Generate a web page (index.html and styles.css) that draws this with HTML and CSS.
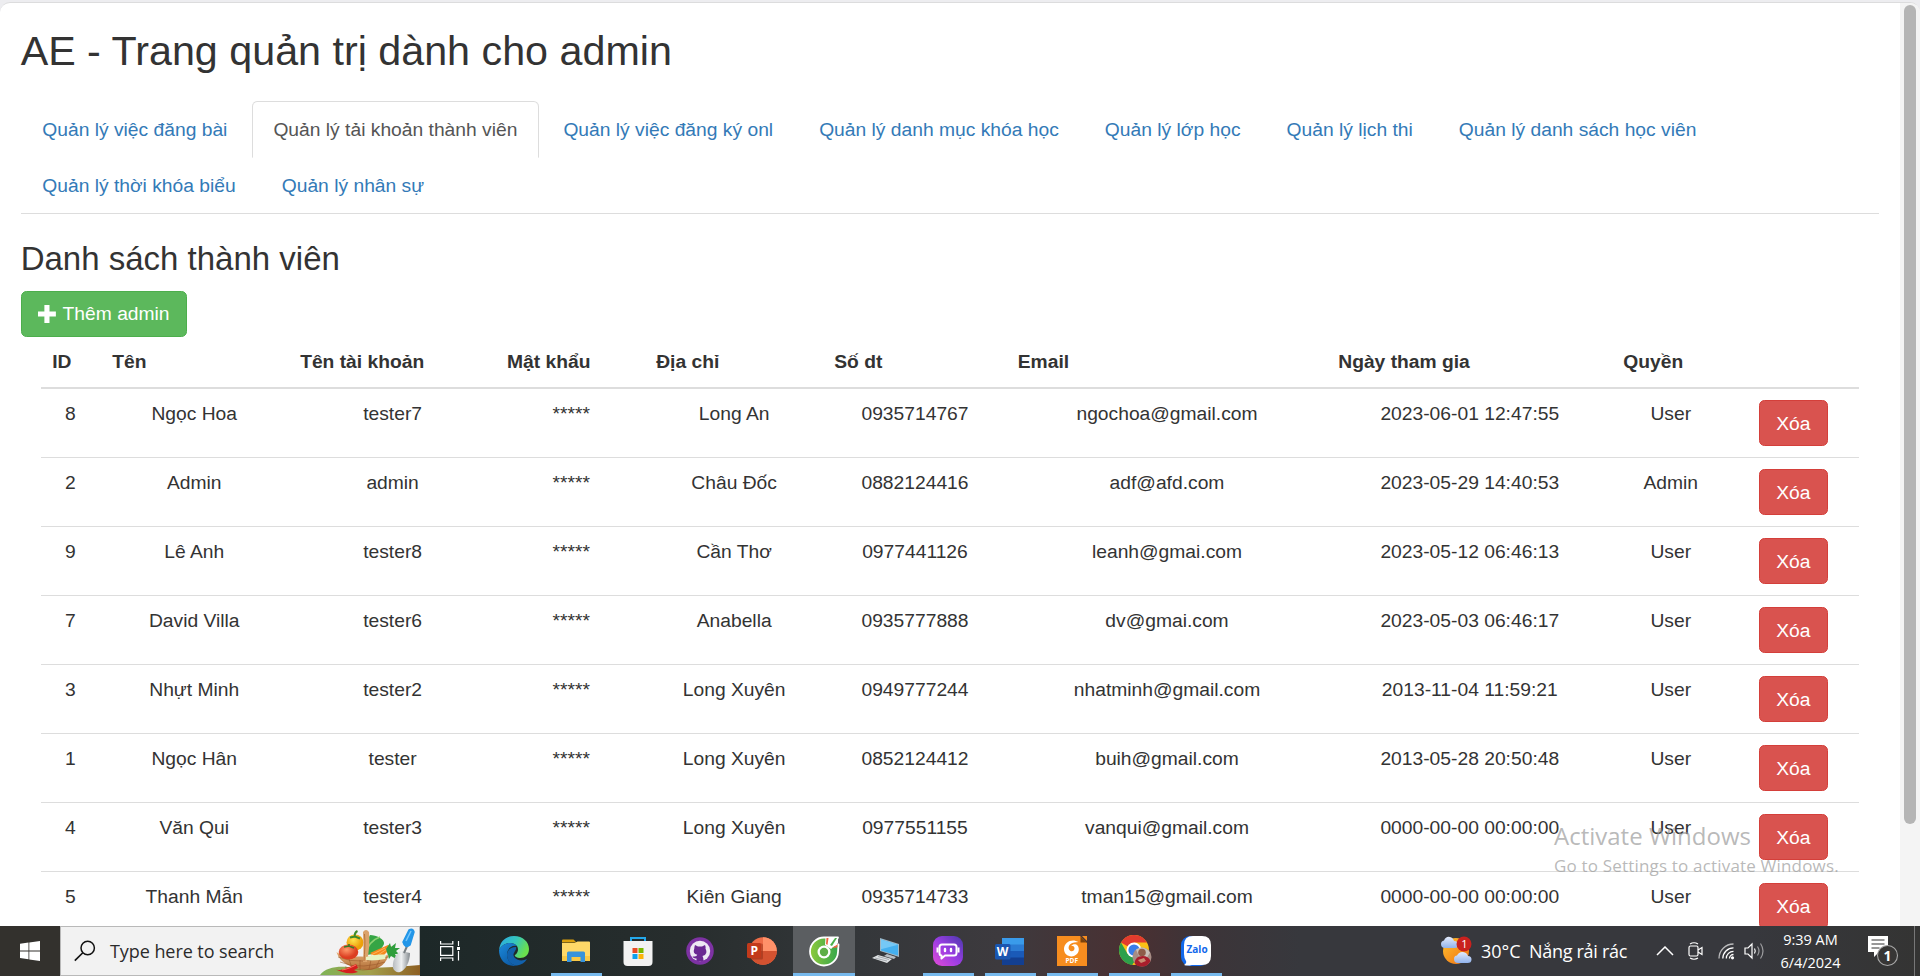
FILE: index.html
```html
<!DOCTYPE html>
<html lang="vi">
<head>
<meta charset="utf-8">
<title>AE - Trang quản trị dành cho admin</title>
<link rel="stylesheet" href="styles.css">
</head>
<body>
<div class="desktop">
  <div class="browser">
    <main class="page">
      <h2 class="title">AE - Trang quản trị dành cho admin</h2>
      <ul class="tabs">
        <li><a>Quản lý việc đăng bài</a></li>
        <li class="active"><a>Quản lý tải khoản thành viên</a></li>
        <li><a>Quản lý việc đăng ký onl</a></li>
        <li><a>Quản lý danh mục khóa học</a></li>
        <li><a>Quản lý lớp học</a></li>
        <li><a>Quản lý lịch thi</a></li>
        <li><a>Quản lý danh sách học viên</a></li>
        <li><a>Quản lý thời khóa biểu</a></li>
        <li><a>Quản lý nhân sự</a></li>
      </ul>
      <h3 class="subtitle">Danh sách thành viên</h3>
      <button class="btn btn-success"><svg class="plus" viewBox="0 0 14 14"><path d="M5 0h4v5h5v4H9v5H5V9H0V5h5z" fill="#fff"/></svg>Thêm admin</button>
      <div class="table-wrap">
        <table class="table">
          <colgroup><col class="c-id"><col class="c-name"><col class="c-user"><col class="c-pass"><col class="c-addr"><col class="c-phone"><col class="c-mail"><col class="c-date"><col class="c-role"><col class="c-act"></colgroup>
          <thead><tr><th>ID</th><th>Tên</th><th>Tên tài khoản</th><th>Mật khẩu</th><th>Địa chỉ</th><th>Số dt</th><th>Email</th><th>Ngày tham gia</th><th>Quyền</th><th></th></tr></thead>
          <tbody>
            <tr><td>8</td><td>Ngọc Hoa</td><td>tester7</td><td>*****</td><td>Long An</td><td>0935714767</td><td>ngochoa@gmail.com</td><td>2023-06-01 12:47:55</td><td>User</td><td><button class="btn btn-danger">Xóa</button></td></tr>
            <tr><td>2</td><td>Admin</td><td>admin</td><td>*****</td><td>Châu Đốc</td><td>0882124416</td><td>adf@afd.com</td><td>2023-05-29 14:40:53</td><td>Admin</td><td><button class="btn btn-danger">Xóa</button></td></tr>
            <tr><td>9</td><td>Lê Anh</td><td>tester8</td><td>*****</td><td>Cần Thơ</td><td>0977441126</td><td>leanh@gmai.com</td><td>2023-05-12 06:46:13</td><td>User</td><td><button class="btn btn-danger">Xóa</button></td></tr>
            <tr><td>7</td><td>David Villa</td><td>tester6</td><td>*****</td><td>Anabella</td><td>0935777888</td><td>dv@gmai.com</td><td>2023-05-03 06:46:17</td><td>User</td><td><button class="btn btn-danger">Xóa</button></td></tr>
            <tr><td>3</td><td>Nhựt Minh</td><td>tester2</td><td>*****</td><td>Long Xuyên</td><td>0949777244</td><td>nhatminh@gmail.com</td><td>2013-11-04 11:59:21</td><td>User</td><td><button class="btn btn-danger">Xóa</button></td></tr>
            <tr><td>1</td><td>Ngọc Hân</td><td>tester</td><td>*****</td><td>Long Xuyên</td><td>0852124412</td><td>buih@gmail.com</td><td>2013-05-28 20:50:48</td><td>User</td><td><button class="btn btn-danger">Xóa</button></td></tr>
            <tr><td>4</td><td>Văn Qui</td><td>tester3</td><td>*****</td><td>Long Xuyên</td><td>0977551155</td><td>vanqui@gmail.com</td><td>0000-00-00 00:00:00</td><td>User</td><td><button class="btn btn-danger">Xóa</button></td></tr>
            <tr><td>5</td><td>Thanh Mẫn</td><td>tester4</td><td>*****</td><td>Kiên Giang</td><td>0935714733</td><td>tman15@gmail.com</td><td>0000-00-00 00:00:00</td><td>User</td><td><button class="btn btn-danger">Xóa</button></td></tr>
          </tbody>
        </table>
      </div>
    </main>
    <div class="scrollbar"><div class="thumb"></div></div>
  </div>

  <div class="watermark"><p class="wm-title">Activate Windows</p><p class="wm-sub">Go to Settings to activate Windows.</p></div>

  <footer class="taskbar">
    <div class="start"><svg width="20" height="20" viewBox="0 0 20 20"><path d="M0 2.8l8.5-1.2v7.9H0zM9.3 1.5L20 0v9.5H9.3zM0 10.4h8.5v7.9L0 17.1zM9.3 10.4H20V20L9.3 18.4z" fill="#fff"/></svg></div>
    <div class="search">
      <svg class="lens" width="22" height="22" viewBox="0 0 22 22"><circle cx="13.7" cy="8" r="6.7" fill="none" stroke="#111" stroke-width="1.5"/><path d="M8.8 12.8L.8 20.6" stroke="#111" stroke-width="1.6"/></svg>
      <span class="search-text">Type here to search</span>
      <svg class="basket" width="100" height="48" viewBox="320 927 100 48">
        <defs>
          <linearGradient id="hill" x1="0" x2="1"><stop offset="0" stop-color="#7fb356"/><stop offset=".5" stop-color="#a3a04c"/><stop offset="1" stop-color="#8d5f22"/></linearGradient>
          <linearGradient id="wicker" x1="0" y1="0" x2="0" y2="1"><stop offset="0" stop-color="#e2ac73"/><stop offset="1" stop-color="#b26f38"/></linearGradient>
          <linearGradient id="steel" x1="0" x2="1"><stop offset="0" stop-color="#b8bcc0"/><stop offset=".5" stop-color="#eef0f1"/><stop offset="1" stop-color="#83898e"/></linearGradient>
          <radialGradient id="tomato" cx=".4" cy=".35"><stop offset="0" stop-color="#ff9a6b"/><stop offset="1" stop-color="#dc3f22"/></radialGradient>
          <radialGradient id="pepper" cx=".4" cy=".35"><stop offset="0" stop-color="#ffe34d"/><stop offset="1" stop-color="#eda10b"/></radialGradient>
        </defs>
        <path d="M320 975c5-7 16-9 28-8 22 2 50 0 72-2v10z" fill="url(#hill)"/>
        <path d="M384 944c1-5-8-9-14-9-3 6-6 12-5 20 9 0 16-4 19-11z" fill="#35a545"/>
        <path d="M380 937c-9 3-13 10-15 18" stroke="#8ed272" stroke-width="1.4" fill="none"/>
        <ellipse cx="355" cy="942.500" rx="8.500" ry="8" fill="url(#pepper)"/>
        <path d="M354.500 937c0-3 1-5 3-6M350 937.500l5-1 5 2" stroke="#3c8a2b" stroke-width="2" fill="none"/>
        <path d="M370 953l18-8 4 2-12 12z" fill="#f58a1e"/>
        <path d="M371 955l14-7M375 957l12-8" stroke="#ffb45a" stroke-width="1"/>
        <path d="M386 949l4-6 1 4 5-4-1 5 5 0-4 3 3 3-4 0 3 6-7-4-2 3z" fill="#2f9e3c"/>
        <path d="M336.500 952c4 5 35 6 52 3-2 8-8 14-20 15-13-1-28-5-32-18z" fill="url(#wicker)"/>
        <path d="M338 957q13 5 25 4t25-4M340 962q12 5 24 4t21-4M345 967q10 3 18 3t16-3M349 959l3 9M360 960v10M371 960l-2 9M380 959l-4 8" stroke="#965528" stroke-width=".8" fill="none" opacity=".7"/>
        <path d="M363 962c1-10 0-24 0-30q3-4 6 0c1 9 0 20-2 30z" fill="#dba26b"/>
        <path d="M364.500 934c1 9 0 19-.500 27" stroke="#b8743b" fill="none"/>
        <path d="M366 957c7-2 14-3 20-2l-1 4c-6 1-13 2-19 1z" fill="#e7f3c3"/>
        <ellipse cx="348.500" cy="952" rx="9.800" ry="7.500" fill="url(#tomato)"/>
        <path d="M344 947l5-1 5 2M349 947v-3" stroke="#387a25" stroke-width="1.600" fill="none"/>
        <path d="M334 969c6 3 13-1 22-5l2 4-4 2 4 2c-9 3-16 0-24-3z" fill="#d51e1e"/>
        <path d="M342 970c6-1 10-3 14-5" stroke="#ff6e5a" fill="none"/>
        <path d="M393 968c-1-6 2-14 8-17l9 2c0 8-4 17-10 19-3 1-6-1-7-4z" fill="url(#steel)"/>
        <path d="M404 953l4-9" stroke="#777d82" stroke-width="2"/>
        <path d="M403 942l6-12q4-2 5 2l-4 13q-5 4-7-3z" fill="#2396e8" stroke="#2396e8" stroke-width="1.500"/>
        <path d="M406 941l5-10" stroke="#75c7fb" stroke-width="1.500"/>
      </svg>
    </div>
    <div class="taskview"><svg width="20" height="20" viewBox="0 0 20 20" fill="none" stroke="#fff" stroke-width="1.2"><path d="M.6 0v3h12.200V0M.6 20v-3h12.200v3M.6 5.600h12.200v8.800H.6zM18.500 0v5M18.500 10v9.500"/><path d="M17 6h3v3h-3z" fill="#fff" stroke="none"/></svg></div>
    <nav class="apps">
      <div class="app"><svg width="30" height="30" viewBox="0 0 30 30">
        <defs><linearGradient id="edgeTop" x1="0" x2="1" y2=".4"><stop offset="0" stop-color="#2aa7e6"/><stop offset=".55" stop-color="#35c6bd"/><stop offset="1" stop-color="#6ae04e"/></linearGradient><linearGradient id="edgeLow" x1="0" x2=".7" y2="1"><stop offset="0" stop-color="#1c8bdc"/><stop offset="1" stop-color="#0c59a4"/></linearGradient></defs>
        <path d="M0 14C1 5 7 0 15 0c9 0 15 6 15 13 0 6-4 9-9 9-4 0-6-2-5-3 3-2 4-6 2-9C14 5 4 6 0 14z" fill="url(#edgeTop)"/>
        <path d="M0 14C4 6 14 5 18 10c-6-1-10 3-10 9 0 5 4 9 9 10.800C6 31 0 23 0 14z" fill="url(#edgeLow)"/>
        <path d="M17 11c-5 0-9 3-9 8 0 6 5 10.500 10 10.500 4-.5 8-3 10-6.500-4 2-9 2-12-1-2-2-2-4-.500-6 1-2 2-3 1.500-5z" fill="#1261ac"/></svg></div>
      <div class="app open"><svg width="28" height="24" viewBox="0 0 28 24"><path d="M0 1.500Q0 .5 1 .5h10.500l3 3H0z" fill="#dca00d"/><path d="M0 4h12.500l3-1.500H27q1 0 1 1V22H0z" fill="#ffd868"/><path d="M0 17h28v5H0z" fill="#f8c845"/><path d="M5 23v-9q0-1.500 1.500-1.500h15Q23 12.500 23 14v9h-4.500v-5h-9v5z" fill="#3793dc"/></svg></div>
      <div class="app"><svg width="30" height="30" viewBox="0 0 30 30"><path d="M8 6V2h14v4" fill="none" stroke="#24a8ea" stroke-width="2"/><path d="M.5 5h29v21q0 4-4 4h-21q-4 0-4-4z" fill="#f2f2f2"/><path d="M9.500 12h5v5h-5z" fill="#e94b25"/><path d="M15.500 12h5v5h-5z" fill="#7ab900"/><path d="M9.500 18h5v5h-5z" fill="#0da0ed"/><path d="M15.500 18h5v5h-5z" fill="#fbb40a"/></svg></div>
      <div class="app"><svg width="28" height="28" viewBox="0 0 28 28"><circle cx="14" cy="14" r="13.800" fill="#7d32a3"/><circle cx="14" cy="14" r="10.200" fill="#eee8f3"/><path d="M9 8l3 1.500h4L19 8q1 2 .5 3.500 3 6-3 7.500 1 1.500 1 5h-7v-2.500q-3 .5-4-2 2 0 4-.5.200-.8.800-1.300-5-.7-3-6.200Q8.200 10 9 8z" fill="#6b2892"/></svg></div>
      <div class="app"><svg width="30" height="28" viewBox="0 0 30 28"><circle cx="16" cy="14" r="13.800" fill="#ee6c47"/><path d="M16 .2A13.800 13.800 0 0 1 29.800 14H16z" fill="#ff9169"/><path d="M2.200 14h27.600a13.800 13.800 0 0 1-27.600 0z" fill="#d35230"/><rect x="2" y="6.500" width="14" height="16" rx="1.500" fill="#8f2c14" opacity=".5"/><rect y="6" width="14" height="15" rx="1.500" fill="#c23a1b"/><text x="3.500" y="18" class="glyph">P</text></svg></div>
      <div class="app current"><svg width="32" height="32" viewBox="0 0 32 32"><defs><linearGradient id="leaf" x1="0" x2="1"><stop offset="0" stop-color="#8fcb3c"/><stop offset=".5" stop-color="#5fb544"/><stop offset="1" stop-color="#35a84c"/></linearGradient></defs><path d="M30 17A14 14 0 1 1 16 2.500h14l-4.500 8 5-1z" fill="url(#leaf)" stroke="#fff" stroke-width="1.800" stroke-linejoin="round"/><path d="M17 10l.5-8H30v6l-7 6z" fill="#fff"/><path d="M18 9l.5-6h2l-1 7zM24 13l6-4-1 3.500z" fill="#ee6440"/><path d="M22 10l5-7 2 0-5 8z" fill="#4bb04a"/><circle cx="16" cy="17" r="6.500" fill="#fff"/><circle cx="16" cy="17" r="4.200" fill="#5eae47"/></svg></div>
      <div class="app"><svg width="30" height="26" viewBox="0 0 30 26"><path d="M9 0l19 6v13L9 13z" fill="#9fb6c3"/><path d="M10 1.500l17 5.300v10.800l-17-5.200z" fill="#45b0ef"/><path d="M10 1.500l17 5.300-17 4.500z" fill="#75c8f6"/><path d="M16 16l9 3-2 2-10-3z" fill="#b8bec3"/><path d="M1 20l6-3 14 4-5 4z" fill="#dfe2e4"/><path d="M4 20l12 3M7 18.500l11 3" stroke="#8c9399" stroke-width=".7"/></svg></div>
      <div class="app open"><svg width="30" height="30" viewBox="0 0 30 30"><defs><linearGradient id="bot" x1="0" y1="1" x2="1" y2="0"><stop offset="0" stop-color="#e34bd7"/><stop offset=".5" stop-color="#9a3de3"/><stop offset="1" stop-color="#4a39ac"/></linearGradient></defs><rect width="30" height="30" rx="9" fill="url(#bot)"/><path d="M9 8.500h12q2.500 0 2.500 2.500v6q0 2.500-2.500 2.500h-9L8.500 22.500v-3Q6.500 19.500 6.500 17v-6Q6.500 8.500 9 8.500z" fill="none" stroke="#fff" stroke-width="2" stroke-linejoin="round"/><path d="M4.500 11.500v5M25.500 11.500v5" stroke="#fff" stroke-width="2"/><path d="M12 13v2M18 13v2" stroke="#fff" stroke-width="2.400" stroke-linecap="round"/></svg></div>
      <div class="app open"><svg width="30" height="28" viewBox="0 0 30 28"><path d="M7 1h22v7H7z" fill="#3a9bea"/><path d="M7 7.500h22V14H7z" fill="#2b7bd3"/><path d="M7 14h22v7H7z" fill="#1a5ab8"/><path d="M7 20.500h22V28H7z" fill="#133f91"/><rect y="7" width="15.500" height="15.500" rx="1.500" fill="#1a56b0"/><text x="1.800" y="18.500" class="glyph">W</text></svg></div>
      <div class="app open"><svg width="30" height="30" viewBox="0 0 30 30"><path d="M0 0h23l7 7v23H0z" fill="#f78d1f"/><path d="M23.500.5v6H30z" fill="#7d430a"/><path d="M25 0h5v5z" fill="#f78d1f"/><path d="M21.500 6C15 2 7.500 6 7 12.500c-.300 6 5 9 10 7.500 5-2 6-7 3.500-10.500-1.500-2-5-1.500-6.500.5 2-.5 3.500.5 3.500 2.500s-2 3.500-4 2.500c-2.500-1.500-2.500-5 0-7 2-1.600 5-1.700 8-2z" fill="#fff"/><text x="8.500" y="27.300" class="pdf">PDF</text></svg></div>
      <div class="app open"><svg class="chrome" width="34" height="32" viewBox="0 0 34 32"><circle cx="15" cy="15" r="15" fill="#fbc116"/><path d="M15 15L2 7.500A15 15 0 0 1 28 7.500H15z" fill="#e33b2e"/><path d="M2 7.500A15 15 0 0 0 13 29.900L21.500 18.500 15 15 8.500 18.700z" fill="#2da04b"/><circle cx="15" cy="15" r="7.500" fill="#fff"/><circle cx="15" cy="15" r="5.600" fill="#397de8"/><circle cx="23" cy="22" r="9.500" fill="#a78d85"/><path d="M17 14.500q8-5 14 3l-3 5-8-1z" fill="#c9c0b8"/><circle cx="23" cy="17.500" r="3.800" fill="#8e5c49"/><path d="M15.500 28q1-7 8-7 6 0 8 5-3 6-9 5.500-5 0-7-3.500z" fill="#a91e2c"/><path d="M19 25l6-2 2 3-5 2z" fill="#c98d72"/></svg></div>
      <div class="app open"><svg width="30" height="30" viewBox="0 0 30 30"><rect width="28" height="30" rx="9" fill="#1268eb"/><path d="M12 0h9q9 0 9 9v11q0 9-9 9H11q-5 1-8 0 3-2 2-4-2-3-2-7V9q0-9 9-9z" fill="#fff"/><text x="5.500" y="17.300" class="zalo">Zalo</text></svg></div>
    </nav>
    <div class="weather">
      <svg width="32" height="30" viewBox="0 0 32 30"><defs><linearGradient id="sun" x1="0" x2="1" y2="1"><stop offset="0" stop-color="#ffc12f"/><stop offset="1" stop-color="#ee6f14"/></linearGradient><linearGradient id="cloud" x1="0" y1="0" x2="0" y2="1"><stop offset="0" stop-color="#e4ebfc"/><stop offset="1" stop-color="#91b3ed"/></linearGradient></defs><circle cx="15" cy="15" r="13" fill="url(#sun)"/><path d="M4 12q-4 0-4-4 0-3 3-3.500Q5 0 9 1q3 .5 4 4 4 0 4 3.500T14 12z" fill="url(#cloud)"/><path d="M17 27q-4 0-4-4 0-3.500 3-3.500 2-4 6-3.500t5 4q3.500 0 3.500 3.500t-4 3.500z" fill="url(#cloud)"/><circle cx="23" cy="8" r="7.500" fill="#c9211e"/><text x="20.200" y="12.300" class="badge">1</text></svg>
      <span class="temp">30°C</span><span class="sky">Nắng rải rác</span>
    </div>
    <div class="tray">
      <svg width="18" height="10" viewBox="0 0 18 10" fill="none" stroke="#fff" stroke-width="1.500"><path d="M1 9l8-8 8 8"/></svg>
      <svg class="cam" width="16" height="18" viewBox="0 0 16 18" fill="none" stroke="#fff" stroke-width="1.200"><rect x="1" y="4" width="9" height="10" rx="1.500"/><path d="M10 8l4-2.500v7L10 10M2 2q4-2.500 8 0M2 16q4 2.500 8 0"/></svg>
      <svg class="wifi" width="17" height="17" viewBox="0 0 17 17" fill="none" stroke="#fff" stroke-width="1.300"><path d="M1 15.500A14.500 14.500 0 0 1 15.500 1" opacity=".65"/><path d="M4.800 15.500A10.700 10.700 0 0 1 15.500 4.800M8.300 15.500a7.200 7.200 0 0 1 7.200-7.200M11.500 15.500a4 4 0 0 1 4-4"/><circle cx="14.500" cy="14.800" r="1.600" fill="#fff" stroke="none"/></svg>
      <svg class="vol" width="21" height="18" viewBox="0 0 21 18" fill="none" stroke="#fff" stroke-width="1.200"><path d="M1 6h3l4-4v14l-4-4H1z"/><path d="M10.500 6.500q1.500 2.500 0 5"/><path d="M13.500 4.500q3 4.500 0 9M16.500 1.500q5 7.500 0 15" opacity=".5"/></svg>
    </div>
    <div class="clock"><span>9:39 AM</span><span>6/4/2024</span></div>
    <div class="notify"><svg width="32" height="32" viewBox="0 0 32 32"><path d="M1 1h20v16h-9l-5 5v-5H1z" fill="#fff"/><path d="M4.500 5h13M4.500 9h13M4.500 13h8" stroke="#333" stroke-width="1.200"/><circle cx="20.500" cy="20.500" r="10" fill="#373635" stroke="#a7a7a7" stroke-width="1.100"/><text x="16.500" y="26" class="count">1</text></svg></div>
  </footer>
</div>
</body>
</html>
```
FILE: styles.css
```css
* { box-sizing: border-box; }
body { margin: 0; overflow: hidden; background: #fff; font-family: "Liberation Sans", Arial, sans-serif; }
.desktop { position: relative; display: flex; flex-direction: column; width: 1920px; height: 976px; overflow: hidden; background: #ededf0; }

.browser { flex: 1; min-height: 0; margin-top: 2px; display: flex; border-top: 1px solid #dcdcdd; border-radius: 10px 10px 0 0; background: #fff; overflow: hidden; }
.page { zoom: 1.375; flex: 1; min-width: 0; padding: 0 15px; font-size: 14px; line-height: 1.42857; color: #333; overflow: hidden; }
.title, .subtitle { font-weight: 400; line-height: 1.1; }
.title { font-size: 30px; margin: 19px 0 19.5px; }
.subtitle { font-size: 24px; margin: 19.3px 0 10px; }

.tabs { display: flex; flex-wrap: wrap; margin: 0; padding: 0 0 .7px; list-style: none; border-bottom: 1px solid #ddd; }
.tabs li { margin-bottom: -1px; }
.tabs a { display: block; margin-right: 2px; padding: 10px 15px; border: 1px solid transparent; border-radius: 4px 4px 0 0; color: #337ab7; }
.tabs .active a { color: #555; border-color: #ddd #ddd transparent; background: #fff; }

.btn { display: inline-block; padding: 6px 12px; border: 1px solid; border-radius: 4px; font: inherit; color: #fff; vertical-align: middle; white-space: nowrap; }
.btn-success { display: flex; align-items: center; background: #5cb85c; border-color: #4cae4c; }
.btn-danger { background: #d9534f; border-color: #d43f3a; }
.plus { width: 13px; height: 13px; margin-right: 4.8px; }

.table-wrap { padding: 0 15px; }
.table { width: 100%; table-layout: fixed; border-collapse: collapse; }
.table th, .table td { padding: 8px; vertical-align: top; white-space: nowrap; }
.table th { padding-bottom: 8.7px; text-align: left; border-bottom: 2px solid #ddd; }
.table td { text-align: center; border-top: 1px solid #ddd; }
.table td:nth-child(1), .table td:nth-child(2), .table td:nth-child(10) { padding-right: 9.4px; }
.table td:nth-child(4) { padding-left: 9px; }
.c-id { width: 43.6px; }
.c-name { width: 136.7px; }
.c-user { width: 150.5px; }
.c-pass { width: 108.4px; }
.c-addr { width: 129.5px; }
.c-phone { width: 133.5px; }
.c-mail { width: 233.1px; }
.c-date { width: 207.3px; }
.c-role { width: 85.1px; }
.c-act { width: 94.5px; }

.scrollbar { width: 20px; padding: 2px 4px; background: #f4f4f4; }
.thumb { height: 819px; border-radius: 6px; background: #b5b5b5; }

.watermark { position: absolute; left: 1554px; top: 820px; color: rgba(150, 150, 150, .68); font-family: "Open Sans", "Noto Sans", sans-serif; white-space: nowrap; }
.wm-title, .wm-sub { margin: 0; }
.wm-title { font-size: 24px; line-height: 32px; }
.wm-sub { font-size: 17px; line-height: 28px; letter-spacing: .18px; }

.taskbar { display: flex; height: 50px; color: #fff; font-family: "Open Sans", "Noto Sans", sans-serif; background: linear-gradient(90deg, #33312d 0, #33312d 60px, #1d2828 420px, #272d2d 680px, #34373a 860px, #3d3a3e 1000px, #4a3032 1135px, #3c3438 1200px, #37383d 1300px, #37383d 1750px, #343433 1920px); }
.start, .taskview { width: 60px; display: flex; align-items: center; justify-content: center; }
.taskview { width: 63px; padding-right: 3px; }
.search { width: 360px; display: flex; align-items: center; background: #f2f2f2; border: 1px solid #b9b9b9; color: #2b2b2b; }
.lens { margin-left: 13px; }
.search-text { flex: 1; margin-left: 14px; font-size: 18px; line-height: 24px; letter-spacing: -.07px; white-space: nowrap; }
.basket { margin-right: -1px; }
.apps { display: flex; }
.app { width: 62px; display: flex; align-items: center; justify-content: center; }
.app.open { background: linear-gradient(#76b9ed, #76b9ed) 6px 47px / 51px 3px no-repeat; }
.app.current { background: linear-gradient(#76b9ed, #76b9ed) 0 47px / 62px 3px no-repeat, #5b5e61; }
.chrome { margin-left: 3px; }
.glyph { font: bold 12px "Open Sans", sans-serif; fill: #fff; }
.pdf { font: bold 6.5px "Open Sans", sans-serif; fill: #fff; }
.zalo { font: bold 10px "Open Sans", sans-serif; fill: #1268eb; }
.badge { font: 11px "Open Sans", sans-serif; fill: #fff; }
.count { font: bold 14px "Open Sans", sans-serif; fill: #fff; }

.weather { display: flex; align-items: center; margin-left: 214px; font-size: 18px; white-space: nowrap; }
.temp { margin-left: 8px; width: 48px; }
.sky { width: 98px; letter-spacing: -.3px; }
.tray { display: flex; align-items: center; margin-left: 29px; }
.cam { margin-left: 14px; }
.wifi { margin-left: 14px; }
.vol { margin-left: 9px; }
.clock { width: 91px; display: flex; flex-direction: column; align-items: center; justify-content: center; font-size: 14.5px; line-height: 23px; letter-spacing: -.05px; }
.notify { flex: 1; margin-right: 5px; padding-left: 11px; display: flex; align-items: center; border-right: 1px solid #777; }
```
